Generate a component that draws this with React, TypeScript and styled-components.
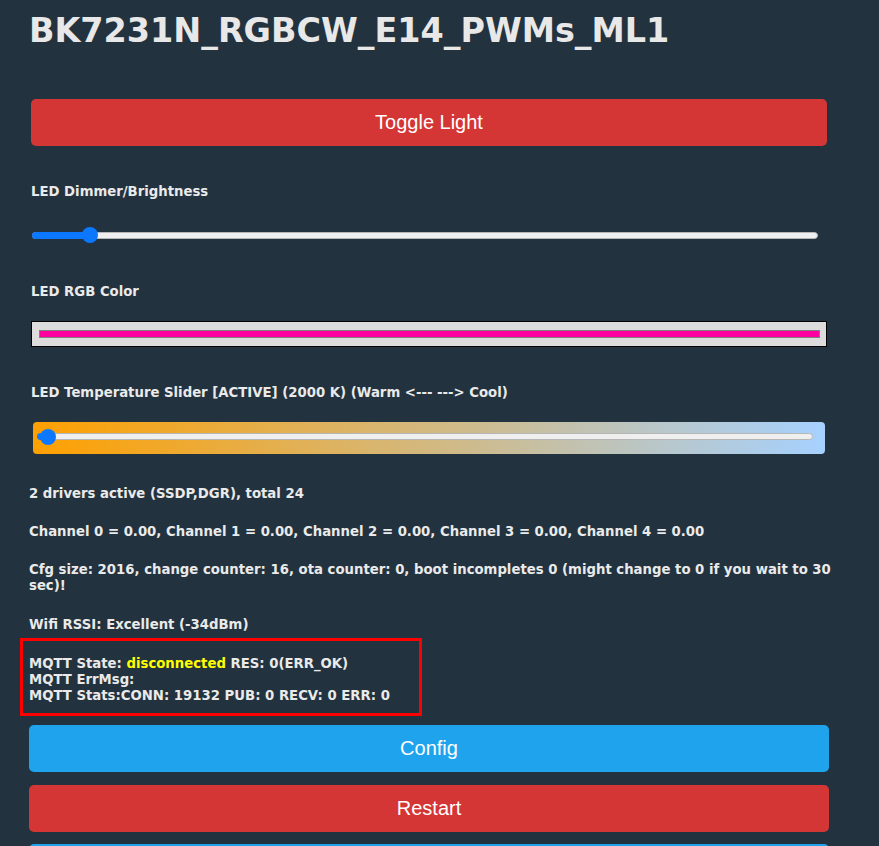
import React from "react";
import styled, {createGlobalStyle} from "styled-components";

const GlobalStyle = createGlobalStyle`
    html, body {
        margin: 0;
        padding: 0;
        background: #22323f;
    }
    body {
        font-family: "DejaVu Sans", Verdana, sans-serif;
        color: #eaeaea;
    }
`;

const Page = styled.div`
    display: flex;
    flex-direction: column;
    width: 800px;
    padding: 0 0 40px 29px;
`;

const Title = styled.h1`
    margin: 11px 0 0 0;
    font-size: 33.4px;
    line-height: 40px;
    font-weight: bold;
    color: #e8e8e8;
    white-space: nowrap;
`;

const Button = styled.div<{ $color: string; $top: number; $inset?: number }>`
    display: flex;
    align-items: center;
    justify-content: center;
    margin: ${p => p.$top}px ${p => p.$inset ?? 0}px 0;
    height: 47px;
    border-radius: 5px;
    background: ${p => p.$color};
    color: #fff;
    font-family: "Liberation Sans", Arial, sans-serif;
    font-size: 20px;
`;

const Label = styled.div<{ $top: number; $left?: number }>`
    margin: ${p => p.$top}px -8px 0 ${p => p.$left ?? 0}px;
    font-size: 13.25px;
    line-height: 16px;
    font-weight: bold;
`;

const SliderWrap = styled.div<{ $top: number }>`
    display: flex;
    align-items: center;
    height: 14px;
    margin: ${p => p.$top}px 11px 0 3px;
`;

const Track = styled.div`
    position: relative;
    flex: 1;
    height: 5px;
    border: 1px solid #b6b6b6;
    border-radius: 4px;
    background: #efefef;
`;

const Fill = styled.div`
    position: absolute;
    left: -1px;
    top: -1px;
    bottom: -1px;
    border-radius: 4px;
    background: #0b78ff;
`;

const Thumb = styled.div`
    position: absolute;
    top: 50%;
    width: 16px;
    height: 16px;
    margin: -8px 0 0 -8px;
    border-radius: 50%;
    background: #0b78ff;
`;

const ColorBox = styled.div<{ $top: number }>`
    display: flex;
    align-items: center;
    margin: ${p => p.$top}px 2px 0 2px;
    height: 24px;
    padding: 0 6px 0 7px;
    border: 1px solid #000;
    background: #dcdcdc;
`;

const ColorSwatch = styled.div<{ $swatch: string }>`
    flex: 1;
    height: 6px;
    border: 1px solid #808080;
    background: ${p => p.$swatch};
`;

const TempBox = styled.div<{ $top: number }>`
    display: flex;
    align-items: center;
    margin: ${p => p.$top}px 4px 0 4px;
    height: 32px;
    padding: 0 12px 3px 4px;
    box-sizing: border-box;
    border-radius: 4px;
    background: linear-gradient(to right, #ffa000, #a6d1ff);
`;

const StatusBox = styled.div`
    margin: 4.5px 0 0 -9px;
    width: 390px;
    padding: 15px 0 9px 6px;
    border: 3px solid #ff0000;
    font-size: 13.25px;
    line-height: 16px;
    font-weight: bold;
`;

const Highlight = styled.span`
    color: #ffff00;
`;

function Slider({value}: { value: number }) {
    const pct = `${value * 100}%`;
    return (
        <Track>
            <Fill style={{width: pct}}/>
            <Thumb style={{left: pct}}/>
        </Track>
    );
}

export default function App() {
    return (
        <>
            <GlobalStyle/>
            <Page>
                <Title>BK7231N_RGBCW_E14_PWMs_ML1</Title>
                <Button $color="#d43535" $top={48} $inset={2}>Toggle Light</Button>

                <Label $top={38} $left={2}>LED Dimmer/Brightness</Label>
                <SliderWrap $top={28}>
                    <Slider value={0.073}/>
                </SliderWrap>

                <Label $top={42} $left={2}>LED RGB Color</Label>
                <ColorBox $top={21}>
                    <ColorSwatch $swatch="#ff00a0"/>
                </ColorBox>

                <Label $top={38} $left={2}>LED Temperature Slider [ACTIVE] (2000 K) (Warm &lt;--- ---&gt; Cool)</Label>
                <TempBox $top={21}>
                    <Slider value={0.013}/>
                </TempBox>

                <Label $top={32}>2 drivers active (SSDP,DGR), total 24</Label>
                <Label $top={22}>Channel 0 = 0.00, Channel 1 = 0.00, Channel 2 = 0.00, Channel 3 = 0.00, Channel 4 = 0.00</Label>
                <Label $top={22}>Cfg size: 2016, change counter: 16, ota counter: 0, boot incompletes 0 (might change to 0 if you wait to 30 sec)!</Label>
                <Label $top={23}>Wifi RSSI: Excellent (-34dBm)</Label>

                <StatusBox>
                    MQTT State: <Highlight>disconnected</Highlight> RES: 0(ERR_OK)<br/>
                    MQTT ErrMsg:<br/>
                    MQTT Stats:CONN: 19132 PUB: 0 RECV: 0 ERR: 0
                </StatusBox>

                <Button $color="#1fa3ec" $top={9}>Config</Button>
                <Button $color="#d43535" $top={13}>Restart</Button>
                <Button $color="#1fa3ec" $top={12}>Launch Web Application</Button>
            </Page>
        </>
    );
}
